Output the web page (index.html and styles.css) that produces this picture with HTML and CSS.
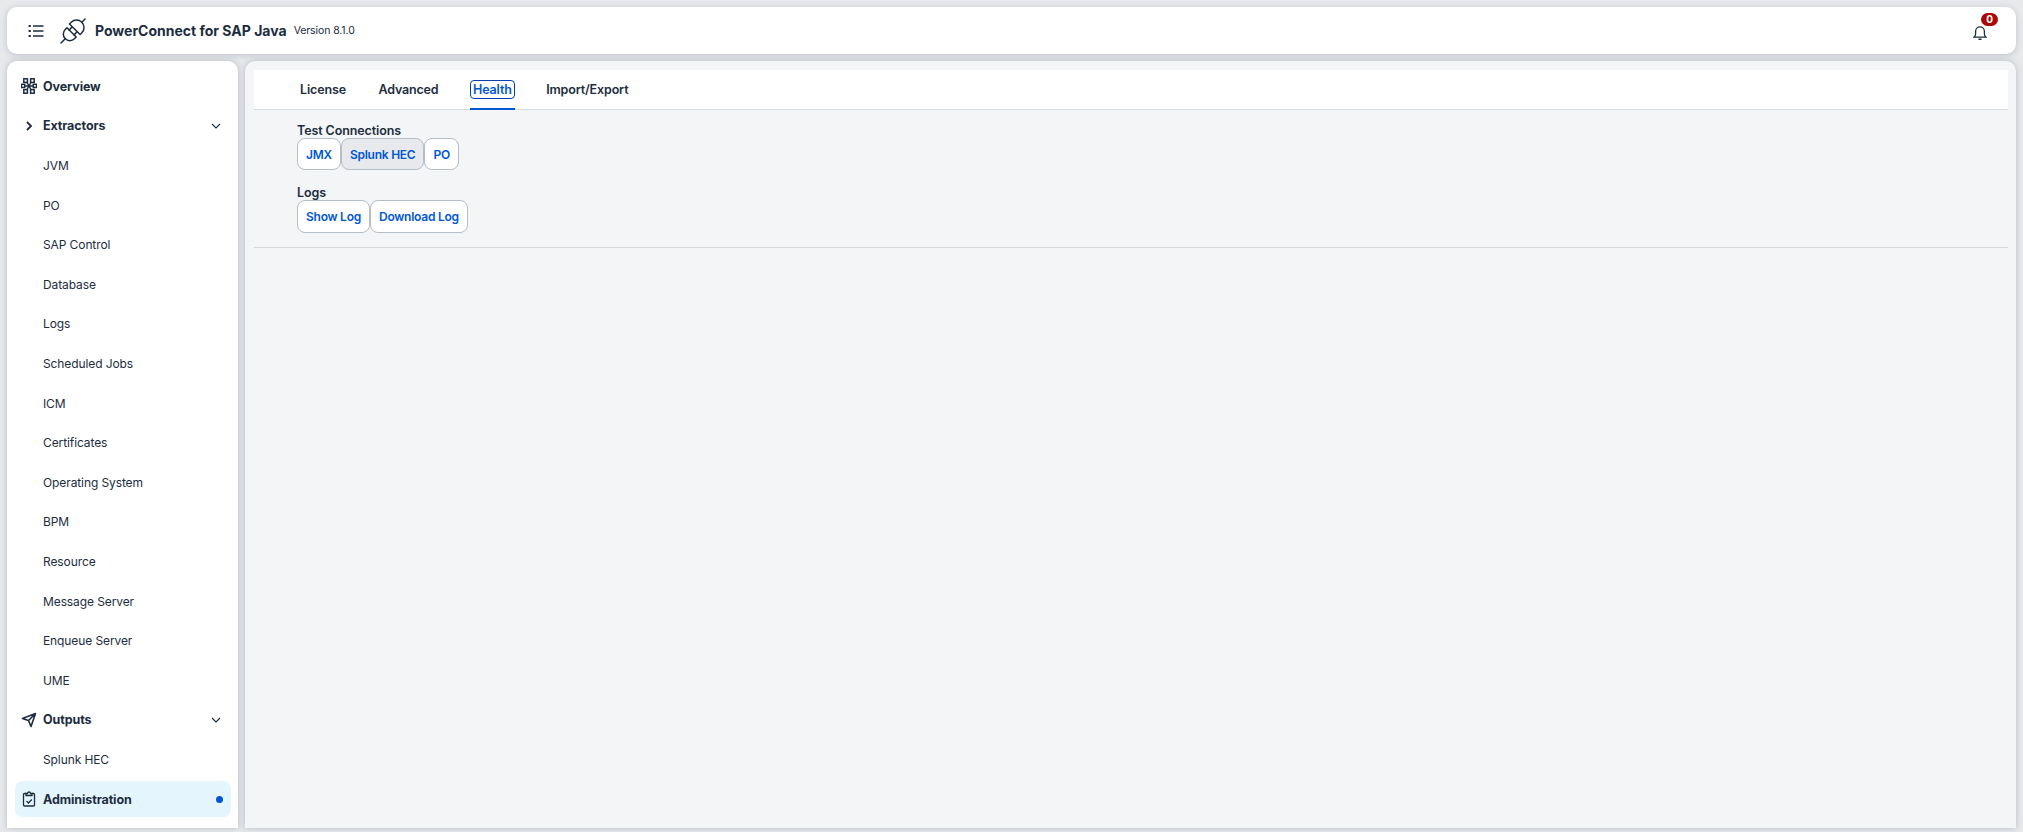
FILE: index.html
```html
<!DOCTYPE html>
<html lang="en">
<head>
<meta charset="utf-8">
<title>PowerConnect for SAP Java</title>
<link rel="stylesheet" href="styles.css">
</head>
<body>
<header class="shell">
  <button class="icon-btn" aria-label="Menu">
    <svg width="16" height="16" viewBox="0 0 16 16" fill="none" stroke="#1d2d3e" stroke-width="1.300"><path d="M5 3h10.500M5 8h10.500M5 13h10.500"/><path d="M.6 3h2.200M.6 8h2.200M.6 13h2.200" stroke-width="2.200"/></svg>
  </button>
  <svg class="logo" width="28" height="28" viewBox="0 0 28 28" fill="none" stroke="#1d2d3e" stroke-width="1.500" stroke-linecap="round" stroke-linejoin="round">
    <g transform="rotate(-45 14 14)">
      <path d="M12 7.500v13H9.500a6.500 6.500 0 0 1 0-13z"/>
      <path d="M3 14H-3"/>
      <path d="M12 10.500h4M12 17.500h4"/>
      <path d="M16.500 6.500v15H19a7.500 7.500 0 0 0 0-15z"/>
      <path d="M26.500 14H31"/>
    </g>
  </svg>
  <span class="product">PowerConnect for SAP Java</span>
  <span class="version">Version 8.1.0</span>
  <div class="bell">
    <svg width="14" height="14" viewBox="0 0 16 16" fill="none" stroke="#1d2d3e" stroke-width="1.500"><path d="M1 12.800h14c-1.400-1-2-2.400-2-4.300V6a5 5 0 0 0-10 0v2.500c0 1.900-.6 3.300-2 4.300z"/><path d="M6.300 15.200h3.400" stroke-width="1.800"/></svg>
    <span class="badge">0</span>
  </div>
</header>
<div class="main">
  <nav class="side">
    <a class="nav-item top">
      <svg class="nav-icon" viewBox="0 0 16 16" fill="none" stroke="#1d2d3e" stroke-width="1.500"><rect x="2.800" y="0.800" width="3.600" height="3.600"/><rect x="9.600" y="0.800" width="3.600" height="3.600"/><rect x="2.800" y="11.600" width="3.600" height="3.600"/><rect x="9.600" y="11.600" width="3.600" height="3.600"/><rect x="0.500" y="6.300" width="3.200" height="3.200"/><rect x="12.300" y="6.300" width="3.200" height="3.200"/><path d="M6 4.500l4 7M10 4.500l-4 7M3.700 8h8.600"/></svg>
      <span>Overview</span>
    </a>
    <a class="nav-item top">
      <svg class="nav-icon" viewBox="0 0 16 16" fill="none" stroke="#1d2d3e" stroke-width="1.800"><path d="M6 4l4 4-4 4"/></svg>
      <span>Extractors</span>
      <svg class="chev" viewBox="0 0 12 12" fill="none" stroke="#1d2d3e" stroke-width="1.100"><path d="M2 4l4 4 4-4"/></svg>
    </a>
    <a class="nav-item sub">JVM</a>
    <a class="nav-item sub">PO</a>
    <a class="nav-item sub">SAP Control</a>
    <a class="nav-item sub">Database</a>
    <a class="nav-item sub">Logs</a>
    <a class="nav-item sub">Scheduled Jobs</a>
    <a class="nav-item sub">ICM</a>
    <a class="nav-item sub">Certificates</a>
    <a class="nav-item sub">Operating System</a>
    <a class="nav-item sub">BPM</a>
    <a class="nav-item sub">Resource</a>
    <a class="nav-item sub">Message Server</a>
    <a class="nav-item sub">Enqueue Server</a>
    <a class="nav-item sub">UME</a>
    <a class="nav-item top">
      <svg class="nav-icon" viewBox="0 0 16 16" fill="none" stroke="#1d2d3e" stroke-width="1.600" stroke-linejoin="round"><path d="M1.500 6.500L14.500 1.500 10 14.500 7.500 8.500zM7.500 8.500L14.500 1.500"/></svg>
      <span>Outputs</span>
      <svg class="chev" viewBox="0 0 12 12" fill="none" stroke="#1d2d3e" stroke-width="1.100"><path d="M2 4l4 4 4-4"/></svg>
    </a>
    <a class="nav-item sub">Splunk HEC</a>
    <a class="nav-item top selected">
      <svg class="nav-icon" viewBox="0 0 16 16" fill="none" stroke="#1d2d3e" stroke-width="1.300"><path d="M5 2.500H3.500a1 1 0 0 0-1 1v10.500a1 1 0 0 0 1 1h9a1 1 0 0 0 1-1V3.500a1 1 0 0 0-1-1H11"/><path d="M5 4.500V2.500h1.500a1.500 1.500 0 0 1 3 0H11v2z"/><path d="M5.500 10l2 2 3.200-3.500"/></svg>
      <span>Administration</span>
      <i class="dot"></i>
    </a>
  </nav>
  <main class="content">
    <div class="tabs">
      <span class="tab">License</span>
      <span class="tab">Advanced</span>
      <span class="tab active"><b>Health</b></span>
      <span class="tab">Import/Export</span>
    </div>
    <section class="panel">
      <h2 class="label">Test Connections</h2>
      <div class="btns"><button class="btn">JMX</button><button class="btn pressed">Splunk HEC</button><button class="btn">PO</button></div>
      <h2 class="label logs">Logs</h2>
      <div class="btns tall"><button class="btn">Show Log</button><button class="btn">Download Log</button></div>
    </section>
    <hr class="rule">
  </main>
</div>
</body>
</html>
```
FILE: styles.css
```css
* { box-sizing: border-box; }
html, body { height: 100%; }
body {
  margin: 0;
  height: 832px;
  overflow: hidden;
  background: #e8e9eb;
  font-family: Inter, "Liberation Sans", sans-serif;
  color: #1d2d3e;
  padding: 7px 7px 4px 7px;
  display: flex;
  flex-direction: column;
  gap: 7px;
}
.shell {
  height: 47px;
  flex: none;
  background: #fff;
  border-radius: 10px;
  box-shadow: 0 1px 6px rgba(85, 107, 130, .3);
  display: flex;
  align-items: center;
  padding-left: 20px;
}
.icon-btn {
  width: 18px;
  height: 18px;
  padding: 0;
  border: 0;
  background: none;
  display: flex;
  align-items: center;
  justify-content: center;
}
.logo { margin-left: 14px; overflow: visible; }
.product { margin-left: 8px; font-size: 14px; font-weight: 700; }
.version { margin-left: 7px; font-size: 10.500px; letter-spacing: -.1px; }
.bell { margin-left: auto; margin-right: 29px; position: relative; width: 14px; height: 14px; }
.badge {
  position: absolute;
  left: 8px;
  top: -11px;
  min-width: 17px;
  height: 13px;
  border-radius: 7px;
  background: #aa0808;
  color: #fff;
  font-size: 10px;
  font-weight: 700;
  line-height: 13px;
  text-align: center;
}
.main { flex: 1; min-height: 0; display: flex; gap: 7px; }
.side {
  width: 231px;
  flex: none;
  background: #fff;
  border-radius: 10px 10px 0 0;
  box-shadow: 0 0 6px rgba(85, 107, 130, .35);
  padding: 5.500px 7px 0 8px;
  display: flex;
  flex-direction: column;
  overflow: hidden;
}
.nav-item {
  height: 39.600px;
  flex: none;
  display: flex;
  align-items: center;
  font-size: 12px;
  letter-spacing: -.1px;
  padding-left: 6px;
  padding-right: 8px;
  border-radius: 8px;
}
.nav-item.top { font-weight: 700; gap: 6px; font-size: 12.500px; letter-spacing: -.1px; }
.nav-item.sub { padding-left: 28px; }
.nav-icon { width: 16px; height: 16px; flex: none; }
.chev { width: 12px; height: 12px; margin-left: auto; margin-right: 1px; }
.selected { height: 36px; margin-top: 2px; background: #e5f5fd; }
.dot { width: 7px; height: 7px; margin-left: auto; border-radius: 50%; background: #0057d2; }
.content {
  flex: 1;
  min-width: 0;
  background: #f3f5f7;
  border-radius: 10px 10px 0 0;
  box-shadow: 0 0 6px rgba(85, 107, 130, .35);
  padding: 9px 8px 0 9px;
}
.tabs {
  height: 40px;
  background: #fff;
  border-bottom: 1px solid #d5dadf;
  display: flex;
  padding-left: 45px;
  gap: 30.500px;
}
.tab {
  height: 40px;
  padding: 12px 1px 0;
  font-size: 12.500px;
  font-weight: 600;
  letter-spacing: -.15px;
  white-space: nowrap;
}
.tab.active { color: #0057d2; border-bottom: 2px solid #0057d2; padding: 10px 0 0; }
.tab.active b {
  display: block;
  font-weight: 600;
  border: 1px solid #0040b0;
  border-radius: 4px;
  padding: 1px 2px;
  height: 19px;
  line-height: 15px;
}
.panel { padding: 14px 0 0 43px; }
.label { margin: 0; font-size: 12.500px; font-weight: 600; line-height: 14px; letter-spacing: -.1px; }
.label.logs { margin-top: 16px; }
.btns { display: flex; height: 32px; }
.btns.tall { height: 33px; }
.btn {
  height: 100%;
  padding: 0 8px;
  background: #fff;
  border: 1px solid #b5bdc6;
  border-radius: 8px;
  color: #0057d2;
  font: 600 12px Inter, "Liberation Sans", sans-serif;
  letter-spacing: -.25px;
}
.pressed { background: #e7e9ec; }
.rule { margin: 14px 0 0; border: 0; border-top: 1px solid #d5dadf; }
```
